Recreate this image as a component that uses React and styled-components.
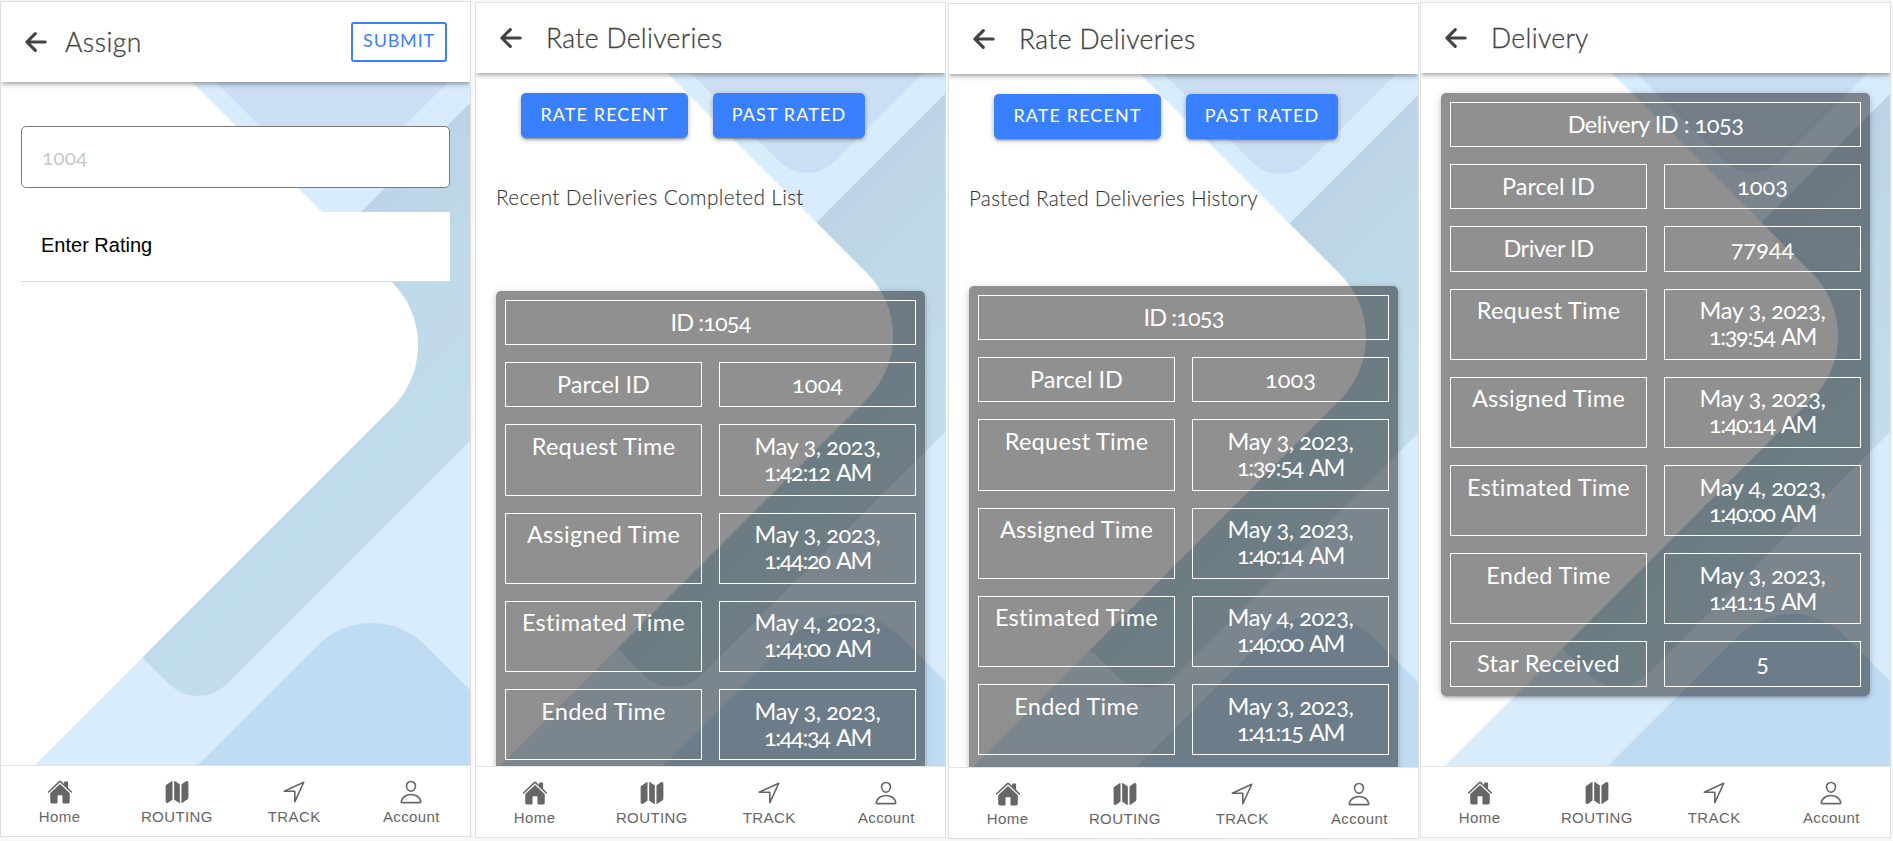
import React from "react";
import styled, { createGlobalStyle } from "styled-components";
import { IoArrowBack, IoHome, IoMap, IoNavigateOutline, IoPersonOutline } from "react-icons/io5";

const Global = createGlobalStyle`
  * { box-sizing: border-box; }
  html, body { margin: 0; background: #f8f8f8; overflow: hidden; }
  h1, p { margin: 0; font-weight: inherit; }
  button { margin: 0; padding: 0; border: 0; font: inherit; }
`;

const display = `Lato, "Open Sans", sans-serif`;

const Board = styled.main`
  width: 1893px;
  height: 841px;
  display: flex;
  align-items: flex-start;
  background: #f8f8f8;
  font-family: ${display};
  font-variant-numeric: oldstyle-nums;
`;

const Phone = styled.section`
  flex: none;
  width: 471px;
  height: 836px;
  margin: ${(p) => p.$top}px 0 0 ${(p) => p.$left}px;
  border: 1px solid #dfdfdf;
  display: flex;
  flex-direction: column;
  background: #fff;
`;

const Header = styled.header`
  flex: none;
  height: ${(p) => (p.$tall ? 80 : 70)}px;
  padding: 0 23px 0 20px;
  display: flex;
  align-items: center;
  background: #fff;
  color: #424242;
  box-shadow: 0 2px 5px rgba(0, 0, 0, 0.38);
  clip-path: inset(0 0 -9px 0);
  z-index: 1;
  svg { flex: none; width: 30px; height: 30px; }
  svg path { stroke-width: 54px; }
`;

const Title = styled.h1`
  flex: 1;
  margin-left: ${(p) => p.$gap}px;
  padding-bottom: 1px;
  font-size: 26.5px;
  line-height: 30px;
  font-weight: 300;
  -webkit-text-stroke: 0.3px currentColor;
  letter-spacing: ${(p) => p.$track || 0}px;
  white-space: nowrap;
`;

const Submit = styled.button`
  width: 96px;
  height: 40px;
  padding-bottom: 4px;
  border: 2px solid #3880ff;
  border-radius: 3px;
  background: #fff;
  color: #3880ff;
  font-size: 18px;
  letter-spacing: 0.8px;
`;

const Content = styled.div`
  flex: 1;
  min-height: 0;
  display: grid;
  grid-template-rows: minmax(0, 1fr);
  overflow: hidden;
  > * { grid-area: 1 / 1; min-width: 0; min-height: 0; }
`;

const Art = styled.svg`
  display: block;
  width: 469px;
  height: 693px;
`;

const Body = styled.div`
  position: relative;
  padding: ${(p) => p.$top || 20}px 20px 0;
`;

const Field = styled.div`
  height: 62px;
  padding: 0 20px 1px;
  border: 1px solid #7b7b7b;
  border-radius: 5px;
  display: flex;
  align-items: center;
  background: #fff;
  color: #c9c9c9;
  font-size: 21px;
`;

const Rating = styled.div`
  height: 70px;
  margin-top: 24px;
  padding: 0 20px 3px;
  border-bottom: 1px solid #dcdcdc;
  display: flex;
  align-items: center;
  background: #fff;
  color: #000;
  font: 20px "Liberation Sans", Arial, sans-serif;
`;

const Buttons = styled.div`
  display: flex;
  gap: 25px;
  padding-left: 25px;
`;

const Primary = styled.button`
  width: ${(p) => p.$w}px;
  height: 45px;
  padding-bottom: 3px;
  border-radius: 5px;
  background: #3880ff;
  color: #fff;
  font-size: 18px;
  letter-spacing: 1.1px;
  white-space: nowrap;
  box-shadow: 0 3px 2px -2px rgba(0, 0, 0, 0.3), 0 2px 4px rgba(0, 0, 0, 0.2), 0 1px 6px rgba(0, 0, 0, 0.12);
`;

const Caption = styled.p`
  height: 24px;
  margin: 47px 0 ${(p) => p.$below}px;
  font-size: 20.8px;
  line-height: 24px;
  font-weight: 300;
  -webkit-text-stroke: 0.25px currentColor;
  letter-spacing: ${(p) => p.$track}px;
  white-space: nowrap;
  color: rgba(0, 0, 0, 0.72);
`;

const Card = styled.div`
  width: 429px;
  padding: 9px 9px ${(p) => (p.$runsOn ? 28 : 9)}px;
  display: grid;
  grid-template-columns: 197px 197px;
  gap: 17px;
  border-radius: 5px;
  background: rgba(0, 0, 0, 0.435);
  box-shadow: 0 3px 2px -2px rgba(0, 0, 0, 0.2), 0 2px 4px rgba(0, 0, 0, 0.14), 0 1px 8px rgba(0, 0, 0, 0.14);
`;

const Cell = styled.div`
  grid-column: ${(p) => (p.$wide ? "1 / -1" : "auto")};
  min-height: 45.2px;
  padding: 7.6px 0 9.6px;
  border: 1px solid #fff;
  color: #fff;
  font-size: 23.5px;
  line-height: 26px;
  text-align: center;
  white-space: nowrap;
`;

const Line = styled.span`
  display: block;
  letter-spacing: ${(p) => p.$track || 0}px;
  word-spacing: ${(p) => p.$gap || 0}px;
`;

const Tabs = styled.nav`
  flex: none;
  height: 71px;
  border-top: 1px solid #e4e4e4;
  display: grid;
  grid-template-columns: repeat(4, 1fr);
  background: #fff;
  z-index: 1;
`;

const Tab = styled.div`
  display: flex;
  flex-direction: column;
  align-items: center;
  padding-top: 13px;
  color: #666;
  font: 15px/17px "Liberation Sans", Arial, sans-serif;
  letter-spacing: 0.4px;
  svg { width: 26px; height: 26px; margin-bottom: 3px; }
`;

function Backdrop({ id }) {
  return (
    <Art viewBox="0 0 469 693" aria-hidden="true">
      <defs>
        <linearGradient id={id} gradientUnits="userSpaceOnUse" x1="245" y1="245" x2="414" y2="414">
          <stop offset="0" stopColor="#bdd3e7" />
          <stop offset="0.25" stopColor="#bdd7e6" />
          <stop offset="0.42" stopColor="#bfdbe8" />
          <stop offset="0.6" stopColor="#c1d9e9" />
          <stop offset="0.76" stopColor="#bfdce9" />
          <stop offset="0.9" stopColor="#c0dde8" />
          <stop offset="1" stopColor="#c5dcea" />
        </linearGradient>
      </defs>
      <path fill="#d9ecfc" d="M191 0H469V693H24L391 326A89 89 0 0 0 391 200Z" />
      <path fill="#ccdef3" d="M215 0H447L358 89A38.5 38.5 0 0 1 304 89Z" />
      <path fill={`url(#${id})`} d="M469 21V359L226 602A41 41 0 0 1 168 602L141.500 575.500L391 326A89 89 0 0 0 391 200L340.500 149.500Z" />
      <path fill="#c0dcf3" d="M469 608V693H187L317 563A76 76 0 0 1 424 563Z" />
    </Art>
  );
}

function Screen({ id, left, top, tall, title, gap, track, action, bodyTop, children }) {
  return (
    <Phone $left={left} $top={top}>
      <Header $tall={tall}>
        <IoArrowBack />
        <Title $gap={gap} $track={track}>{title}</Title>
        {action}
      </Header>
      <Content>
        <Backdrop id={id} />
        <Body $top={bodyTop}>{children}</Body>
      </Content>
      <Tabs>
        <Tab><IoHome />Home</Tab>
        <Tab><IoMap />ROUTING</Tab>
        <Tab><IoNavigateOutline />TRACK</Tab>
        <Tab><IoPersonOutline />Account</Tab>
      </Tabs>
    </Phone>
  );
}

const isTime = (text) => /[AP]M$/.test(text);

function valueTrack(text) {
  if (isTime(text)) return -1.35;
  if (/,$/.test(text)) return -0.4;
  return 0;
}

function labelTrack(text) {
  if (text === "Driver ID") return -0.5;
  return /ID$/.test(text) ? 0 : 0.3;
}

function Details({ heading, headingTrack, rows, runsOn }) {
  return (
    <Card $runsOn={runsOn}>
      <Cell $wide><Line $track={headingTrack}>{heading}</Line></Cell>
      {rows.map(([label, ...lines]) => (
        <React.Fragment key={label}>
          <Cell><Line $track={labelTrack(label)}>{label}</Line></Cell>
          <Cell>
            {lines.map((line) => (
              <Line key={line} $track={valueTrack(line)} $gap={isTime(line) ? 2.5 : 0}>{line}</Line>
            ))}
          </Cell>
        </React.Fragment>
      ))}
    </Card>
  );
}

function Filters() {
  return (
    <Buttons>
      <Primary $w={167}>RATE RECENT</Primary>
      <Primary $w={152}>PAST RATED</Primary>
    </Buttons>
  );
}

const recent = [
  ["Parcel ID", "1004"],
  ["Request Time", "May 3, 2023,", "1:42:12 AM"],
  ["Assigned Time", "May 3, 2023,", "1:44:20 AM"],
  ["Estimated Time", "May 4, 2023,", "1:44:00 AM"],
  ["Ended Time", "May 3, 2023,", "1:44:34 AM"],
];

const times = [
  ["Request Time", "May 3, 2023,", "1:39:54 AM"],
  ["Assigned Time", "May 3, 2023,", "1:40:14 AM"],
  ["Estimated Time", "May 4, 2023,", "1:40:00 AM"],
  ["Ended Time", "May 3, 2023,", "1:41:15 AM"],
];

export default function App() {
  return (
    <Board>
      <Global />
      <Screen id="band-a" left={0} top={1} tall title="Assign" gap={14} track={0.5} action={<Submit>SUBMIT</Submit>} bodyTop={44}>
        <Field>1004</Field>
        <Rating>Enter Rating</Rating>
      </Screen>
      <Screen id="band-b" left={4} top={2} title="Rate Deliveries" gap={20} track={0.35}>
        <Filters />
        <Caption $below={82} $track={0.35}>Recent Deliveries Completed List</Caption>
        <Details heading="ID :1054" headingTrack={-0.9} rows={recent} runsOn />
      </Screen>
      <Screen id="band-c" left={2} top={3} title="Rate Deliveries" gap={20} track={0.35}>
        <Filters />
        <Caption $below={76} $track={0.2}>Pasted Rated Deliveries History</Caption>
        <Details heading="ID :1053" headingTrack={-0.9} rows={[["Parcel ID", "1003"], ...times]} runsOn />
      </Screen>
      <Screen id="band-d" left={1} top={2} title="Delivery" gap={20} track={0.35}>
        <Details
          heading="Delivery ID : 1053"
          headingTrack={-0.5}
          rows={[["Parcel ID", "1003"], ["Driver ID", "77944"], ...times, ["Star Received", "5"]]}
        />
      </Screen>
    </Board>
  );
}
